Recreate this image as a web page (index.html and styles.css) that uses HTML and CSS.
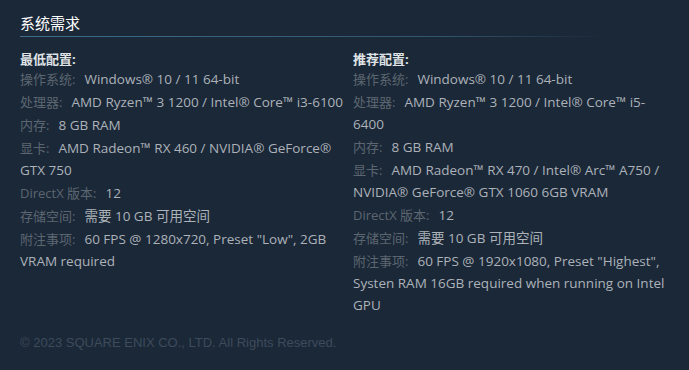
FILE: index.html
```html
<!DOCTYPE html>
<html lang="zh-CN">
<head>
<meta charset="utf-8">
<link rel="stylesheet" href="styles.css">
</head>
<body>
<div class="page">
  <h2 class="title">系统需求</h2>
  <div class="sysreq">
    <div class="col">
      <ul>
        <li class="head">最低配置:</li>
        <li><span class="lbl">操作系统:</span>Windows® 10 / 11 64-bit</li>
        <li><span class="lbl">处理器:</span>AMD Ryzen™ 3 1200 / Intel® Core™ i3-6100</li>
        <li><span class="lbl">内存:</span>8 GB RAM</li>
        <li><span class="lbl">显卡:</span>AMD Radeon™ RX 460 / NVIDIA® GeForce® GTX 750</li>
        <li><span class="lbl">DirectX 版本:</span>12</li>
        <li><span class="lbl">存储空间:</span>需要 10 GB 可用空间</li>
        <li><span class="lbl">附注事项:</span>60 FPS @ 1280x720, Preset "Low", 2GB VRAM required</li>
      </ul>
    </div>
    <div class="col">
      <ul>
        <li class="head">推荐配置:</li>
        <li><span class="lbl">操作系统:</span>Windows® 10 / 11 64-bit</li>
        <li><span class="lbl">处理器:</span>AMD Ryzen™ 3 1200 / Intel® Core™ i5-<br>6400</li>
        <li><span class="lbl">内存:</span>8 GB RAM</li>
        <li><span class="lbl">显卡:</span>AMD Radeon™ RX 470 / Intel® Arc™ A750 / NVIDIA® GeForce® GTX 1060 6GB VRAM</li>
        <li><span class="lbl">DirectX 版本:</span>12</li>
        <li><span class="lbl">存储空间:</span>需要 10 GB 可用空间</li>
        <li><span class="lbl">附注事项:</span>60 FPS @ 1920x1080, Preset "Highest", Systen RAM 16GB required when running on Intel GPU</li>
      </ul>
    </div>
  </div>
  <p class="legal">© 2023 SQUARE ENIX CO., LTD. All Rights Reserved.</p>
</div>
</body>
</html>
```

FILE: styles.css
```css
html, body {
  margin: 0;
  padding: 0;
  background: #1b2838;
}
.page {
  padding: 12px 20px 0 20px;
  font-family: "Open Sans", "Noto Sans CJK SC", sans-serif;
}
.title {
  margin: 0;
  font-size: 15px;
  font-weight: normal;
  color: #ffffff;
  line-height: 22px;
  padding-bottom: 2px;
  background-image: linear-gradient(to right, #3d6c8d 0%, #30566f 65%, rgba(40,70,95,0) 90%);
  background-size: 100% 1px;
  background-repeat: no-repeat;
  background-position: bottom left;
  height: 23px;
}
.sysreq {
  display: grid;
  grid-template-columns: 326px 316px;
  column-gap: 7px;
  margin-top: 14px;
}
.col ul {
  list-style: none;
  margin: 0;
  padding: 0;
}
.col li {
  font-size: 13.5px;
  line-height: 22px;
  margin-bottom: 1px;
  color: #acb2b8;
}
.col li.head {
  color: #dfe3e6;
  font-weight: bold;
  font-size: 13px;
  line-height: 17px;
  margin-bottom: 0;
}
.lbl {
  display: inline-block;
  line-height: 18px;
  color: #5b6670;
  font-size: 13px;
  margin-right: 9px;
}
.legal {
  margin: 18px 0 0 0;
  font-family: "Liberation Sans", Arial, sans-serif;
  font-size: 13px;
  color: #3d4b5b;
}
```
